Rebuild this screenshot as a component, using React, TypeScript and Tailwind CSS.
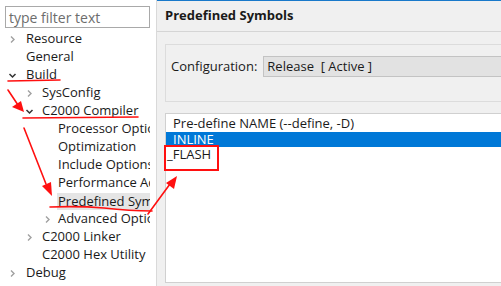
import React from "react";

type Node = { label: string; level: number; chevron?: "right" | "down"; selected?: boolean };

const tree: Node[] = [
  { label: "Resource", level: 0, chevron: "right" },
  { label: "General", level: 0 },
  { label: "Build", level: 0, chevron: "down" },
  { label: "SysConfig", level: 1, chevron: "right" },
  { label: "C2000 Compiler", level: 1, chevron: "down" },
  { label: "Processor Options", level: 2 },
  { label: "Optimization", level: 2 },
  { label: "Include Options", level: 2 },
  { label: "Performance Advisor", level: 2 },
  { label: "Predefined Symbols", level: 2, selected: true },
  { label: "Advanced Options", level: 2, chevron: "right" },
  { label: "C2000 Linker", level: 1, chevron: "right" },
  { label: "C2000 Hex Utility", level: 1 },
  { label: "Debug", level: 0, chevron: "right" },
];

const indent = ["pl-[25px]", "pl-[41px]", "pl-[57px]"];
const chevLeft = ["left-[8px]", "left-[25px]", "left-[43px]"];

function Chevron({ dir }: { dir: "right" | "down" }) {
  if (dir === "right")
    return (
      <svg width="9" height="9" viewBox="0 0 9 9">
        <path d="M3 1.5 L6 4.5 L3 7.5" fill="none" stroke="#a0a0a0" strokeWidth="1.4" />
      </svg>
    );
  return (
    <svg width="9" height="9" viewBox="0 0 9 9">
      <path d="M1.5 3 L4.5 6 L7.5 3" fill="none" stroke="#333" strokeWidth="1.5" />
    </svg>
  );
}

export default function App() {
  return (
    <div
      className="relative flex w-[501px] h-[286px] overflow-hidden text-[13px] text-[#1a1a1a]"
      style={{ fontFamily: '"Open Sans", "Noto Sans", sans-serif' }}
    >
      {/* left tree */}
      <div className="w-[157px] shrink-0 bg-white border-r border-[#d9d9d9] pt-[6px]">
        <div className="ml-[5px] w-[145px] h-[22px] border border-[#a9a9a9] px-[3px] flex items-center text-[#6d6d6d] text-[14px]">
          type filter text
        </div>
        <div className="mt-[2px] w-[150px] overflow-hidden">
          {tree.map((n) => (
            <div key={n.label} className="relative h-[18px] flex items-center whitespace-nowrap">
              {n.chevron && (
                <span className={`absolute top-[5px] ${chevLeft[n.level]}`}>
                  <Chevron dir={n.chevron} />
                </span>
              )}
              <span className={`${indent[n.level]} flex items-center h-full`}>
                <span className={n.selected ? "bg-[#e5e5e5] pl-[1px] pr-[20px] h-[17px] leading-[17px]" : "pl-[1px]"}>
                  {n.label}
                </span>
              </span>
            </div>
          ))}
        </div>
      </div>

      {/* right page */}
      <div className="flex-1 bg-[#f0f0f0] border-t border-[#1979ca] flex flex-col">
        <div className="h-[31px] border-b border-[#d5d5d5] pl-[8px] flex items-center font-bold text-[13px]">
          Predefined Symbols
        </div>
        <div className="ml-[8px] mt-[12px] h-[58px] border border-[#dcdcdc] border-r-0 flex items-start pt-[11px] pl-[5px] gap-[6px]">
          <span className="h-[21px] leading-[21px]">Configuration:</span>
          <div className="flex-1 h-[21px] bg-[#e2e2e2] border border-[#c3c3c3] border-r-0 pl-[3px] flex items-center whitespace-pre">
            Release  [ Active ]
          </div>
        </div>
        <div className="ml-[8px] mt-[11px] h-[170px] bg-white border border-[#d0d0d0] border-r-0 pt-[1px]">
          <div className="h-[17px] flex items-center pl-[7px]">Pre-define NAME (--define, -D)</div>
          <div className="h-[15px] flex items-center pl-[7px] bg-[#0078d7] text-white">INLINE</div>
          <div className="h-[15px] flex items-center pl-[1px]">_FLASH</div>
        </div>
      </div>

      {/* red annotations */}
      <svg className="absolute inset-0 pointer-events-none" width="501" height="286" viewBox="0 0 501 286">
        <g stroke="#ff1010" strokeWidth="1.6" fill="none" strokeLinecap="round">
          <path d="M8 81 L60 80" />
          <path d="M23 118 L138 117" />
          <path d="M50 207 Q80 206 104 208 Q130 211 152 211" />
          <path d="M8 90 L18 105" />
          <path d="M24 128 L46 184" />
          <path d="M148 214 L170 184" />
          <rect x="165" y="146" width="53" height="24" strokeWidth="2" />
        </g>
        <g fill="#ff1010">
          <path d="M24 112 L12 107 L21 101 Z" />
          <path d="M52 196 L42 186 L51 182 Z" />
          <path d="M177 176 L174 189 L166 183 Z" />
        </g>
      </svg>
    </div>
  );
}
